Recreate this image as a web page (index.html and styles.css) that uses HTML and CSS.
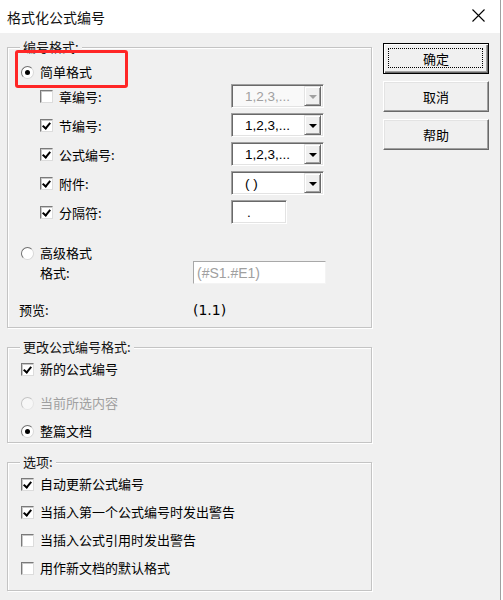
FILE: index.html
```html
<!DOCTYPE html>
<html lang="zh-CN">
<head>
    <meta charset="UTF-8">
    <meta name="viewport" content="width=device-width, initial-scale=1.0">
    <title>格式化公式编号</title>
    <link rel="stylesheet" href="styles.css">
</head>
<body>
    <div class="window">
        <div class="titlebar">
            <span class="title">格式化公式编号</span>
            <svg class="close" width="13" height="13" viewBox="0 0 13 13">
                <path d="M0.5 0.5 L12.5 12.5 M12.5 0.5 L0.5 12.5" stroke="#000" stroke-width="1.1" fill="none"/>
            </svg>
        </div>

        <div class="content">
            <div class="left">
                <div class="group g1">
                    <span class="legend">编号格式:</span>
                    <span class="mark"></span>

                    <div class="row simple">
                        <span class="radio on"></span>
                        <span>简单格式</span>
                    </div>

                    <div class="fields">
                        <div class="field">
                            <span class="check"></span>
                            <span class="flabel">章编号:</span>
                            <span class="combo disabled"><span class="ctext">1,2,3,...</span><span class="dd"></span></span>
                        </div>
                        <div class="field">
                            <span class="check on"></span>
                            <span class="flabel">节编号:</span>
                            <span class="combo"><span class="ctext">1,2,3,...</span><span class="dd"></span></span>
                        </div>
                        <div class="field">
                            <span class="check on"></span>
                            <span class="flabel">公式编号:</span>
                            <span class="combo"><span class="ctext">1,2,3,...</span><span class="dd"></span></span>
                        </div>
                        <div class="field">
                            <span class="check on"></span>
                            <span class="flabel">附件:</span>
                            <span class="combo"><span class="ctext">( )</span><span class="dd"></span></span>
                        </div>
                        <div class="field">
                            <span class="check on"></span>
                            <span class="flabel">分隔符:</span>
                            <span class="textbox sep">.</span>
                        </div>
                    </div>

                    <div class="row adv">
                        <span class="radio"></span>
                        <span>高级格式</span>
                    </div>
                    <div class="row fmt">
                        <span class="fmtlabel">格式:</span>
                        <span class="textbox expr">(#S1.#E1)</span>
                    </div>
                    <div class="row preview">
                        <span class="prelabel">预览:</span>
                        <span class="prevalue">(1.1)</span>
                    </div>
                </div>

                <div class="group g2">
                    <span class="legend">更改公式编号格式:</span>
                    <div class="row">
                        <span class="check on"></span>
                        <span>新的公式编号</span>
                    </div>
                    <div class="row r2 grey">
                        <span class="radio disabled"></span>
                        <span>当前所选内容</span>
                    </div>
                    <div class="row r3">
                        <span class="radio on"></span>
                        <span>整篇文档</span>
                    </div>
                </div>

                <div class="group g3">
                    <span class="legend">选项:</span>
                    <div class="row">
                        <span class="check on"></span>
                        <span>自动更新公式编号</span>
                    </div>
                    <div class="row">
                        <span class="check on"></span>
                        <span>当插入第一个公式编号时发出警告</span>
                    </div>
                    <div class="row">
                        <span class="check"></span>
                        <span>当插入公式引用时发出警告</span>
                    </div>
                    <div class="row">
                        <span class="check"></span>
                        <span>用作新文档的默认格式</span>
                    </div>
                </div>
            </div>

            <div class="buttons">
                <button class="btn default">确定</button>
                <button class="btn">取消</button>
                <button class="btn">帮助</button>
            </div>
        </div>
    </div>
</body>
</html>
```

FILE: styles.css
```css
html {
    background: #ffffff;
}
body {
    margin: 0;
    width: 503px;
    height: 600px;
    overflow: hidden;
    font-family: "Noto Sans CJK SC", "DejaVu Sans", sans-serif;
    font-size: 13px;
    color: #000000;
}
.window {
    width: 500px;
    height: 600px;
    border-right: 1px solid #a0a0a0;
    background: #f0f0f0;
}
.titlebar {
    height: 33px;
    background: #ffffff;
    display: flex;
    align-items: center;
    justify-content: space-between;
    padding: 0 15px 0 7px;
    box-sizing: border-box;
}
.title {
    font-size: 14px;
    color: #111111;
    margin-top: 1px;
}
.close {
    margin-top: -3px;
}
.content {
    display: flex;
    padding: 10px 0 0 7px;
}
.left {
    width: 365px;
    display: flex;
    flex-direction: column;
    padding-top: 4px;
}
.buttons {
    display: flex;
    flex-direction: column;
    gap: 7px;
    margin-left: 11px;
}

/* group boxes */
.group {
    position: relative;
    box-sizing: border-box;
    border: 1px solid #c4c4c4;
    box-shadow: inset 1px 1px 0 #ffffff, 1px 1px 0 #ffffff;
    padding-left: 13px;
    display: flex;
    flex-direction: column;
}
.legend {
    position: absolute;
    top: -10px;
    left: 12px;
    padding: 0 3px;
    line-height: 18px;
    background: #f0f0f0;
    color: #111111;
}
.g1 {
    height: 281px;
    padding-top: 12px;
}
.g2 {
    height: 96px;
    margin-top: 19px;
    padding-top: 13px;
}
.g3 {
    height: 129px;
    margin-top: 19px;
    padding-top: 13px;
    gap: 12px;
}
.mark {
    position: absolute;
    left: 7px;
    top: 2px;
    width: 113px;
    height: 38px;
    box-sizing: border-box;
    border: 3px solid #ff2626;
    border-radius: 3px;
}

.row {
    display: flex;
    align-items: center;
    height: 16px;
    line-height: 16px;
    gap: 6px;
    white-space: nowrap;
}
.simple {
    height: 24px;
}
.g2 .r2 {
    margin-top: 18px;
}
.g2 .r3 {
    margin-top: 12px;
}
.grey {
    color: #a0a0a0;
}

/* number fields */
.fields {
    display: flex;
    flex-direction: column;
    gap: 5px;
    margin-left: 19px;
}
.field {
    display: flex;
    align-items: center;
    height: 24px;
}
.flabel {
    width: 172px;
    margin-left: 6px;
}
.adv {
    margin-top: 21px;
}
.fmt {
    height: 23px;
    gap: 0;
}
.fmtlabel {
    width: 153px;
    margin-left: 19px;
}
.preview {
    height: 20px;
    margin-top: 16px;
    gap: 0;
}
.prelabel {
    width: 174px;
    margin-left: -2px;
}
.prevalue {
    font-family: "DejaVu Sans", sans-serif;
    font-size: 14px;
}

/* radio & check */
.radio {
    width: 13px;
    height: 13px;
    box-sizing: border-box;
    border-radius: 50%;
    border: 1px solid;
    border-color: #707070 #d8d8d8 #d8d8d8 #707070;
    background: #ffffff;
    position: relative;
    flex: none;
}
.radio.on::after {
    content: "";
    position: absolute;
    left: 3px;
    top: 3px;
    width: 5px;
    height: 5px;
    border-radius: 50%;
    background: #000000;
}
.radio.disabled {
    border-color: #c4c4c4 #e4e4e4 #e4e4e4 #c4c4c4;
    background: #f7f7f7;
}
.check {
    width: 13px;
    height: 13px;
    box-sizing: border-box;
    border: 1px solid;
    border-color: #7a7a7a #dcdcdc #dcdcdc #7a7a7a;
    box-shadow: inset 1px 1px 0 #c8c8c8;
    background: #ffffff;
    position: relative;
    flex: none;
}
.check.on::after {
    content: "";
    position: absolute;
    left: 3px;
    top: 1px;
    width: 3px;
    height: 6px;
    border: solid #000000;
    border-width: 0 2px 2px 0;
    transform: rotate(40deg);
}

/* combo boxes */
.combo, .textbox {
    box-sizing: border-box;
    height: 24px;
    border: 1px solid;
    border-color: #a0a0a0 #ffffff #ffffff #a0a0a0;
    box-shadow: inset 1px 1px 0 #696969, inset -1px -1px 0 #e3e3e3;
    background: #ffffff;
    display: flex;
    align-items: center;
    font-family: "Liberation Sans", sans-serif;
    font-size: 13.5px;
}
.combo {
    width: 93px;
    padding: 2px 2px 2px 13px;
    justify-content: space-between;
}
.combo.disabled {
    background: #f9f9f9;
    color: #a0a0a0;
}
.dd {
    width: 17px;
    height: 20px;
    box-sizing: border-box;
    border: 1px solid;
    border-color: #e3e3e3 #696969 #696969 #e3e3e3;
    box-shadow: inset 1px 1px 0 #ffffff, inset -1px -1px 0 #a0a0a0;
    background: #f0f0f0;
    display: flex;
    align-items: center;
    justify-content: center;
}
.dd::after {
    content: "";
    border-left: 4px solid transparent;
    border-right: 4px solid transparent;
    border-top: 4px solid #000000;
    margin-top: 1px;
}
.combo.disabled .dd::after {
    border-top-color: #a0a0a0;
}
.textbox.sep {
    width: 56px;
    padding-left: 15px;
}
.textbox.expr {
    width: 133px;
    height: 23px;
    padding-left: 3px;
    color: #a0a0a0;
    background: #ffffff;
    border-color: #a8a8a8 #f4f4f4 #f4f4f4 #a8a8a8;
    box-shadow: none;
    font-size: 14px;
}

/* buttons */
.btn {
    position: relative;
    width: 106px;
    height: 31px;
    padding: 0;
    font-family: "Noto Sans CJK SC", sans-serif;
    font-size: 13px;
    color: #000000;
    background: #f0f0f0;
    border: 1px solid;
    border-color: #ffffff #696969 #696969 #ffffff;
    box-shadow: inset -1px -1px 0 #a0a0a0, inset 1px 1px 0 #e3e3e3;
}
.btn.default {
    border-color: #000000;
    box-shadow: inset 1px 1px 0 #ffffff, inset -1px -1px 0 #696969, inset -2px -2px 0 #a0a0a0;
}
.btn.default::after {
    content: "";
    position: absolute;
    left: 4px;
    top: 4px;
    right: 5px;
    bottom: 5px;
    border: 1px dotted #000000;
}
```
